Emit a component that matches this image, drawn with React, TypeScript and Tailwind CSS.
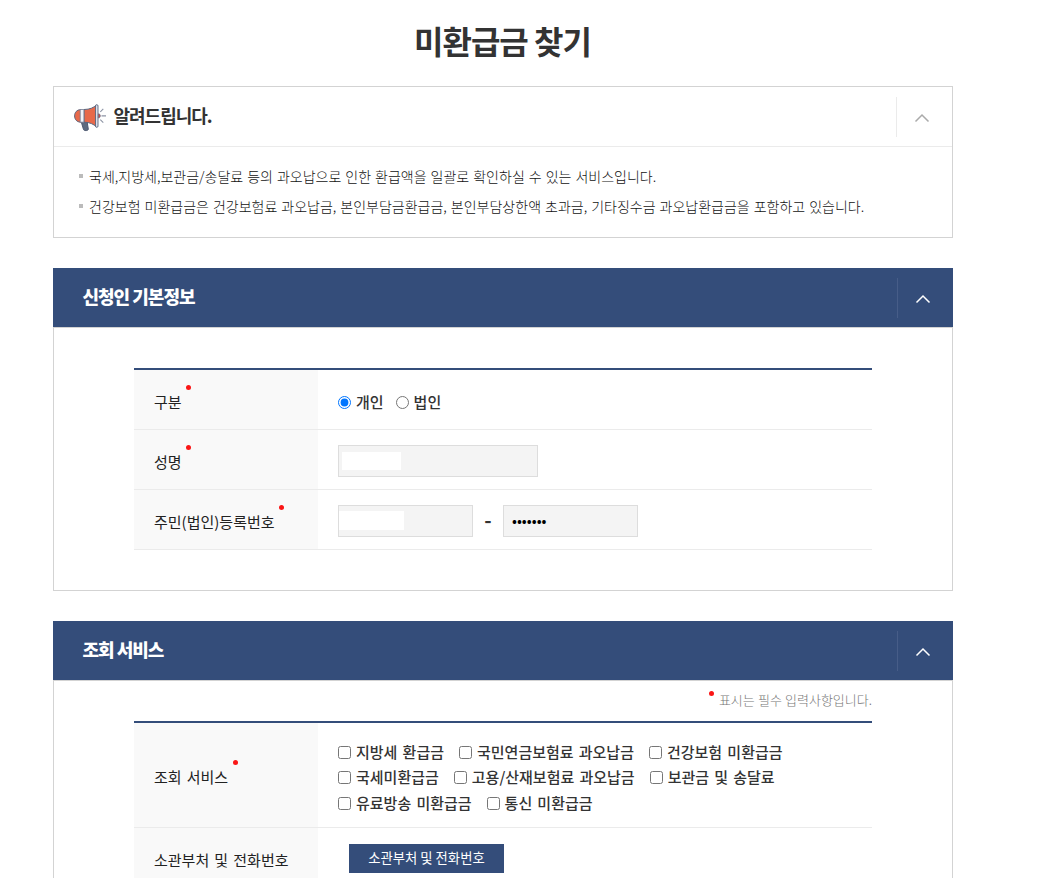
import { useState, type ReactNode } from "react";
import clsx from "clsx";

const NOTICES = [
    "국세,지방세,보관금/송달료 등의 과오납으로 인한 환급액을 일괄로 확인하실 수 있는 서비스입니다.",
    "건강보험 미환급금은 건강보험료 과오납금, 본인부담금환급금, 본인부담상한액 초과금, 기타징수금 과오납환급금을 포함하고 있습니다.",
];

const SERVICES = [
    ["지방세 환급금", "국민연금보험료 과오납금", "건강보험 미환급금"],
    ["국세미환급금", "고용/산재보험료 과오납금", "보관금 및 송달료"],
    ["유료방송 미환급금", "통신 미환급금"],
];

function MegaphoneIcon() {
    return (
        <svg width="32" height="28" viewBox="0 0 32 28" fill="none" className="mt-0.5 shrink-0">
            <path d="M7 17h6l1.300 8.200c.2 1.600-4.300 2-4.800.3z" fill="#5d6b80" stroke="#4c5870" strokeWidth="1" />
            <path d="M10 5.500C16 5.500 19.500 3.500 22.500 1.200V22.800C19.500 20.300 16 18.200 10 18.200z" fill="#e8694a" stroke="#59647d" strokeWidth="1" />
            <path d="M7 5.600C2.800 5.600 .6 8.500 .6 11.900S2.800 18.200 7 18.200z" fill="#e8694a" stroke="#59647d" strokeWidth="1" />
            <path d="M6.200 5.500h3.700v12.700H6.200z" fill="#f1f2f7" stroke="#737c93" strokeWidth=".8" />
            <rect x="21.500" y=".7" width="2.500" height="22.600" rx="1.200" fill="#dce0eb" stroke="#59647d" strokeWidth=".9" />
            <path d="M24.400 9.800c2.600 0 2.600 4.200 0 4.200z" fill="#c94f4b" stroke="#59647d" strokeWidth=".6" />
            <path d="M26.300 7.800l3-3M27.500 11.900H32M26.300 15.700l3 3" stroke="#8d94a5" strokeWidth="1.100" />
        </svg>
    );
}

function ToggleButton({ open, onClick, light }: { open: boolean; onClick: () => void; light?: boolean }) {
    return (
        <button
            type="button"
            onClick={onClick}
            aria-expanded={open}
            className={clsx(
                "flex h-10 w-14 items-center justify-center border-l pt-0.5 pr-[5px]",
                light ? "border-[#ebebeb] text-[#aaa]" : "border-[#475d88] text-white"
            )}
        >
            <svg width="16" height="10" viewBox="0 0 16 10" fill="none" className={open ? "" : "rotate-180"}>
                <path d="M1.500 8.500L8 2l6.500 6.500" stroke="currentColor" strokeWidth="1.500" />
            </svg>
        </button>
    );
}

function Required() {
    return <i className="size-[5px] shrink-0 rounded-full bg-[#fa1616]" />;
}

function Panel({ title, children }: { title: string; children: ReactNode }) {
    const [open, setOpen] = useState(true);
    return (
        <section className="mt-[30px]">
            <header className="flex h-[59px] items-center justify-between bg-[#344d7a] pl-[29.500px]">
                <h2 className="pb-[3px] text-[18px] leading-[30px] font-black tracking-[-1px] text-white">{title}</h2>
                <ToggleButton open={open} onClick={() => setOpen(!open)} />
            </header>
            {open && <div className="border border-[#d3d3d3] px-20 pb-10">{children}</div>}
        </section>
    );
}

function Row({ label, required, children }: { label: string; required?: boolean; children: ReactNode }) {
    return (
        <div className="flex min-h-[60px] border-b border-[#ebebeb]">
            <div className="flex w-[184px] shrink-0 items-center bg-[#f9f9f9] pt-1 pl-5">
                <div className="flex gap-[4.500px] leading-[34px] text-[#222] [word-spacing:1.800px]">
                    {label}
                    {required && <Required />}
                </div>
            </div>
            <div className="flex flex-1 items-center pl-5">{children}</div>
        </div>
    );
}

export default function App() {
    const [noticeOpen, setNoticeOpen] = useState(true);
    const [kind, setKind] = useState("개인");

    return (
        <div className="h-[878px] overflow-hidden bg-white font-['Noto_Sans_CJK_KR',sans-serif] text-[15px] text-[#333]">
            <main className="ml-[53px] w-[900px]">
                <h1 className="h-[86px] pt-4 pr-px text-center text-[32px] leading-[48px] font-bold tracking-[-1px]">
                    미환급금 찾기
                </h1>

                <section className="border border-[#d3d3d3]">
                    <header className="flex h-[60px] items-center justify-between border-b border-[#ebebeb] pl-5">
                        <div className="flex items-center gap-[7.500px]">
                            <MegaphoneIcon />
                            <h2 className="pb-[3px] text-[18px] leading-[30px] font-bold tracking-[-1px]">알려드립니다.</h2>
                        </div>
                        <ToggleButton light open={noticeOpen} onClick={() => setNoticeOpen(!noticeOpen)} />
                    </header>
                    {noticeOpen && (
                        <ul className="h-[90px] pt-[14px] pl-[25px] text-[14px] leading-[30px] font-light text-[#111] [word-spacing:0.900px]">
                            {NOTICES.map((text) => (
                                <li key={text} className="flex items-center gap-1.5 whitespace-nowrap">
                                    <i className="size-1 bg-[#bbb]" />
                                    {text}
                                </li>
                            ))}
                        </ul>
                    )}
                </section>

                <Panel title="신청인 기본정보">
                    <div className="mt-10 border-t-2 border-[#344d7a]">
                        <Row label="구분" required>
                            <div className="flex gap-3 pt-1.5 font-medium">
                                {["개인", "법인"].map((name) => (
                                    <label key={name} className="flex items-center gap-[5px]">
                                        <input
                                            type="radio"
                                            name="kind"
                                            className="size-[13px]"
                                            checked={kind === name}
                                            onChange={() => setKind(name)}
                                        />
                                        {name}
                                    </label>
                                ))}
                            </div>
                        </Row>
                        <Row label="성명" required>
                            <div className="mt-0.5 flex h-8 w-[200px] items-center border border-[#ddd] bg-[#f4f4f4] pl-[3px]">
                                <span className="h-[18px] w-[59px] bg-white" />
                            </div>
                        </Row>
                        <Row label="주민(법인)등록번호" required>
                            <div className="mt-0.5 flex h-8 w-[135px] border border-[#ddd] bg-[#f4f4f4] pt-[5px]">
                                <span className="h-[19px] w-[65px] bg-white" />
                            </div>
                            <span className="w-[30px] text-center text-[20px] font-bold">-</span>
                            <input
                                type="password"
                                readOnly
                                value="0000000"
                                className="mt-0.5 h-8 w-[135px] border border-[#ddd] bg-[#f4f4f4] px-2 pb-[3px] text-[14.500px] text-black"
                            />
                        </Row>
                    </div>
                </Panel>

                <Panel title="조회 서비스">
                    <div className="flex h-10 justify-end gap-[5px] pt-2.5 text-[13px] font-light text-[#777] [word-spacing:0.300px]">
                        <Required />
                        <span className="-mt-px leading-5">표시는 필수 입력사항입니다.</span>
                    </div>
                    <div className="border-t-2 border-[#344d7a]">
                        <Row label="조회 서비스" required>
                            <div className="h-[104px] pt-[16.500px] leading-[25.5px] font-medium [word-spacing:1.800px]">
                                {SERVICES.map((line) => (
                                    <div key={line[0]} className="flex gap-[15px]">
                                        {line.map((name) => (
                                            <label key={name} className="flex items-center gap-[5px]">
                                                <input type="checkbox" className="size-[13px]" />
                                                <span className="-mt-px mb-px">{name}</span>
                                            </label>
                                        ))}
                                    </div>
                                ))}
                            </div>
                        </Row>
                        <Row label="소관부처 및 전화번호">
                            <button type="button" className="mt-0.5 ml-[11px] h-[29px] w-[155px] bg-[#344d7a] pb-0.5 text-[13.333px] text-white">
                                소관부처 및 전화번호
                            </button>
                        </Row>
                    </div>
                </Panel>
            </main>
        </div>
    );
}
